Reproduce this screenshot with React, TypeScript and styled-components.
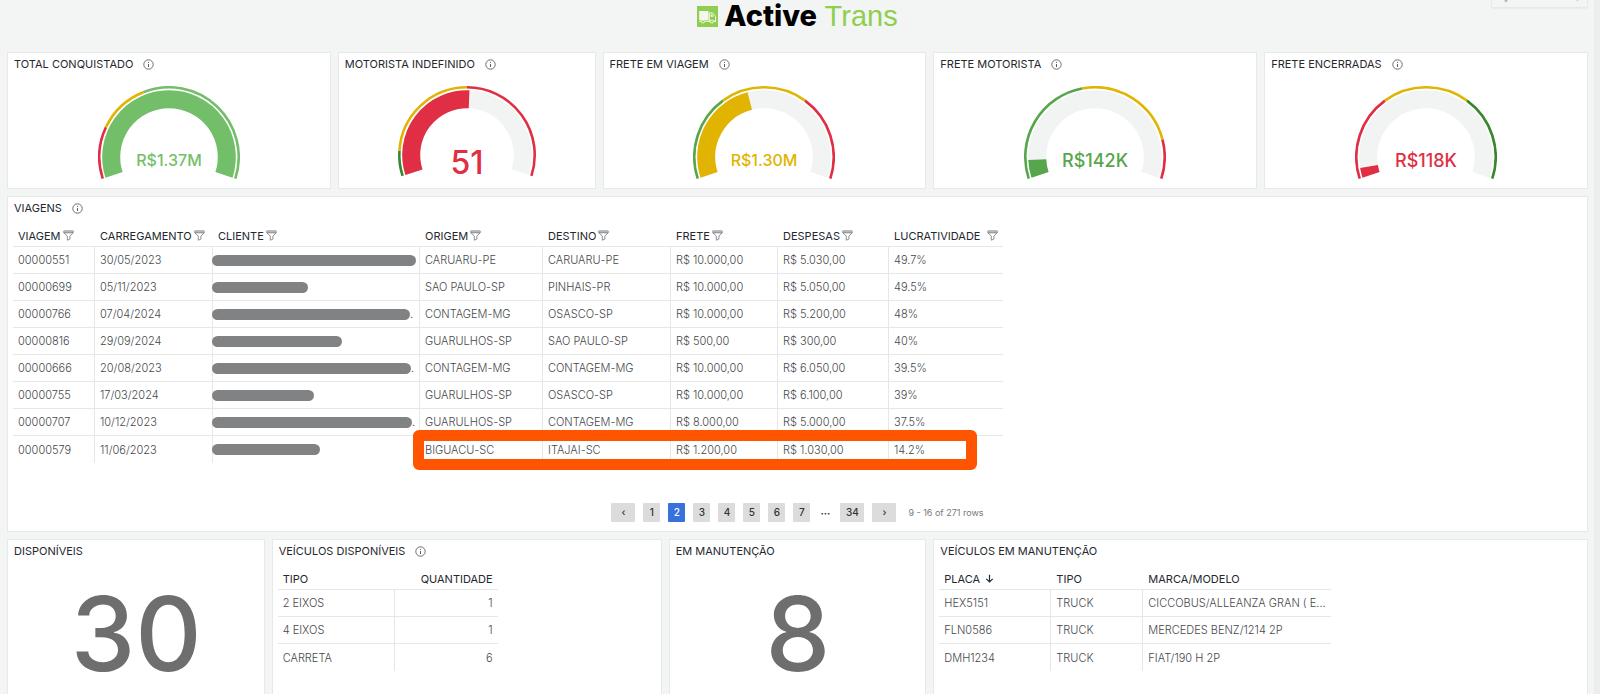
import React from "react";
import styled, { createGlobalStyle } from "styled-components";

const GREEN = "#73bf69";
const MID_GREEN = "#56a64b";
const DARK_GREEN = "#37872d";
const YELLOW = "#e0b400";
const RED = "#e02f44";

const GlobalStyle = createGlobalStyle`
  * { box-sizing: border-box; }
  body {
    margin: 0;
    background: #f3f5f4;
    color: #24292e;
    font-family: Inter, "Liberation Sans", sans-serif;
    font-size: 11px;
    line-height: 16px;
  }
`;

const Page = styled.div`
  display: flex;
  min-height: 100vh;
`;

const Main = styled.main`
  flex: 1;
  min-width: 0;
  display: flex;
  flex-direction: column;
  gap: 7px;
  padding: 0 6px 0 7px;
`;

const ScrollTrack = styled.div`
  width: 6px;
  background: #eceeed;
`;

const TopBar = styled.header`
  display: grid;
  grid-template-columns: 1fr auto 1fr;
  height: 45px;
`;

const Brand = styled.h1`
  grid-column: 2;
  display: flex;
  align-items: center;
  gap: 6px;
  height: 32px;
  margin: 0;
  font-size: 29px;
  line-height: 32px;
  font-weight: 400;
`;

const BrandStrong = styled.strong`
  font-weight: 800;
  color: #000;
`;

const BrandLight = styled.span`
  font-family: "Liberation Sans", Arial, sans-serif;
  color: #8fce4e;
`;

const TimeButton = styled.button`
  justify-self: end;
  display: flex;
  justify-content: space-between;
  align-items: flex-start;
  width: 97px;
  height: 8px;
  padding: 0 8px 0 12px;
  border: 1px solid #e7e9e8;
  border-top: 0;
  border-radius: 0 0 2px 2px;
  background: #f3f5f4;
  box-shadow: 0 1px 1px #e9ebea;
`;

const Row = styled.section<{ $fill?: boolean }>`
  display: grid;
  grid-template-columns: repeat(24, minmax(0, 1fr));
  gap: 7px;
  flex: ${(p) => (p.$fill ? "1 0 auto" : "0 0 auto")};
`;

const Panel = styled.article<{ $span: number; $height?: number; $open?: boolean }>`
  grid-column: span ${(p) => p.$span};
  display: flex;
  flex-direction: column;
  min-height: ${(p) => p.$height ?? 0}px;
  padding: 0 5px;
  background: #fff;
  border: 1px solid #e6e9e8;
  border-bottom-width: ${(p) => (p.$open ? 0 : 1)}px;
`;

const PanelTitle = styled.h2`
  display: flex;
  align-items: center;
  gap: 10px;
  height: 22px;
  margin: 0;
  padding-left: 1px;
  font-size: 11px;
  font-weight: 400;
`;

const GaugeSvg = styled.svg`
  display: block;
  margin: 11px auto 0;
`;

const TableWrap = styled.div`
  position: relative;
  align-self: flex-start;
  max-width: 100%;
  margin-top: 6px;
`;

const Table = styled.table<{ $width: number }>`
  width: ${(p) => p.$width}px;
  table-layout: fixed;
  border-collapse: separate;
  border-spacing: 0;
`;

const Th = styled.th<{ $right?: boolean }>`
  height: 22px;
  padding: 0 5px;
  border-bottom: 1px solid #e6e7e7;
  font-weight: 400;
  text-align: ${(p) => (p.$right ? "right" : "left")};
  white-space: nowrap;
`;

const HeadLabel = styled.span<{ $gap: number }>`
  display: inline-flex;
  align-items: center;
  gap: ${(p) => p.$gap}px;
`;

const Td = styled.td<{ $right?: boolean }>`
  height: 27px;
  padding: 0 5px;
  border-bottom: 1px solid #e6e7e7;
  border-right: 1px solid #e6e7e7;
  color: #45484b;
  font-weight: 300;
  text-align: ${(p) => (p.$right ? "right" : "left")};
  white-space: nowrap;
  &:last-child { border-right: 0; }
  tr:last-child > & { border-bottom: 0; }
`;

const Hidden = styled.div`
  display: flex;
  align-items: center;
  margin: 0 -6px;
`;

const Redaction = styled.span<{ $width: number }>`
  flex: none;
  width: ${(p) => p.$width}px;
  height: 11px;
  border-radius: 6px;
  background: #808284;
`;

const Highlight = styled.div`
  position: absolute;
  left: 400px;
  right: 26px;
  bottom: -7px;
  height: 40px;
  border: 11px solid #ff5500;
  border-radius: 6px;
  pointer-events: none;
`;

const Pager = styled.nav`
  display: flex;
  justify-content: center;
  align-items: center;
  gap: 8px;
  margin: auto 0 9px;
  font-size: 10px;
`;

const PageButton = styled.button<{ $active?: boolean; $wide?: boolean }>`
  width: ${(p) => (p.$wide ? 24 : 17)}px;
  height: 19px;
  padding: 0;
  border: 0;
  border-radius: 1px;
  background: ${(p) => (p.$active ? "#3871dc" : "#dcdcdc")};
  color: ${(p) => (p.$active ? "#fff" : "#303236")};
  font: 500 10px/19px Inter, sans-serif;
`;

const Dots = styled.span`
  width: 14px;
  font-weight: 700;
  text-align: center;
`;

const RowCount = styled.span`
  margin-left: 4px;
  font-size: 9px;
  color: #77797b;
`;

const Stat = styled.p`
  margin: 12px 0 0;
  padding-left: 1px;
  text-align: center;
  font-size: 103px;
  line-height: 120px;
  font-weight: 500;
  color: #6e6e6e;
`;

const InfoIcon = () => (
  <svg width="11" height="11" viewBox="0 0 11 11" fill="none" stroke="#5c5f62" aria-hidden="true">
    <circle cx="5.5" cy="5.5" r="4.7" strokeWidth="0.9" />
    <path d="M5.5 5v3" strokeWidth="1" />
    <path d="M5.5 2.9v1" strokeWidth="1" />
  </svg>
);

const FilterIcon = () => (
  <svg width="11" height="11" viewBox="0 0 11 11" fill="none" stroke="#808386" strokeWidth="0.9" strokeLinejoin="round" aria-hidden="true">
    <path d="M0.8 0.9h9.4v1.9L6.9 6v3.1L4.3 10.2V6L0.8 2.8z" />
    <path d="M1 1.9h9" strokeWidth="1.8" stroke="#b4b6b8" />
    <path d="M0.8 2.8h9.4" />
  </svg>
);

const ArrowDown = () => (
  <svg width="9" height="9" viewBox="0 0 9 9" fill="none" stroke="#24292e" strokeWidth="1.2" aria-hidden="true">
    <path d="M4.5 0.8v7M1.3 4.8l3.2 3.2 3.2-3.2" />
  </svg>
);

const TruckLogo = () => (
  <svg width="21" height="21" viewBox="0 0 21 21" aria-hidden="true">
    <rect width="21" height="21" fill="#8fce4e" />
    <path d="M2.2 5h9.3v9.2H2.2z" fill="#f3f9ec" />
    <path d="M12.3 7h3.3l3 3.6v4.6h-6.3z" fill="none" stroke="#f3f9ec" strokeWidth="1" />
    <path d="M13.6 8.5h1.6l1.5 2.2h-3.1z" fill="#f3f9ec" />
    <path d="M2.2 15.3h16.6" stroke="#f3f9ec" strokeWidth="1" />
    <g fill="#8fce4e" stroke="#f3f9ec" strokeWidth="0.9">
      <circle cx="5.8" cy="15.6" r="1.5" />
      <circle cx="14.8" cy="15.6" r="1.5" />
    </g>
  </svg>
);

type Zone = { to: number; color: string };

const SWEEP = 216;

function arc(cx: number, cy: number, r: number, from: number, to: number) {
  const point = (f: number) => {
    const a = ((f * SWEEP - SWEEP / 2) * Math.PI) / 180;
    return `${(cx + r * Math.sin(a)).toFixed(2)} ${(cy - r * Math.cos(a)).toFixed(2)}`;
  };
  const large = (to - from) * SWEEP > 180 ? 1 : 0;
  return `M${point(from)} A${r} ${r} 0 ${large} 1 ${point(to)}`;
}

type GaugeProps = {
  radius: number;
  label: string;
  size: number;
  value: number;
  color: string;
  zones: Zone[];
};

function Gauge({ radius, label, size, value, color, zones }: GaugeProps) {
  const c = 71;
  const thin = 2.6;
  const thick = 18;
  const ring = radius - thin / 2;
  const band = radius - 4.2 - thick / 2;
  return (
    <GaugeSvg width="142" height="96" viewBox="0 0 142 96" fill="none" role="img" aria-label={label}>
      <path d={arc(c, radius, band, 0, 1)} stroke="#f2f4f4" strokeWidth={thick} />
      <path d={arc(c, radius, band, 0, value)} stroke={color} strokeWidth={thick} />
      {zones.map((z, i) => (
        <path key={z.to} d={arc(c, radius, ring, i ? zones[i - 1].to : 0, z.to)} stroke={z.color} strokeWidth={thin} />
      ))}
      <text x={c} y={Math.round(72 + size * 0.5)} textAnchor="middle" fill={color} fontSize={size} fontWeight={500}>
        {label}
      </text>
    </GaugeSvg>
  );
}

const gauges: (GaugeProps & { title: string; span: number })[] = [
  { title: "TOTAL CONQUISTADO", span: 5, radius: 71, label: "R$1.37M", size: 16, value: 1, color: GREEN,
    zones: [{ to: 0.2, color: RED }, { to: 0.4, color: YELLOW }, { to: 1, color: GREEN }] },
  { title: "MOTORISTA INDEFINIDO", span: 4, radius: 69, label: "51", size: 32, value: 0.51, color: RED,
    zones: [{ to: 0.1, color: DARK_GREEN }, { to: 0.5, color: YELLOW }, { to: 1, color: RED }] },
  { title: "FRETE EM VIAGEM", span: 5, radius: 71, label: "R$1.30M", size: 16, value: 0.434, color: YELLOW,
    zones: [{ to: 0.333, color: MID_GREEN }, { to: 0.667, color: YELLOW }, { to: 1, color: RED }] },
  { title: "FRETE MOTORISTA", span: 5, radius: 71, label: "R$142K", size: 18, value: 0.071, color: MID_GREEN,
    zones: [{ to: 0.45, color: MID_GREEN }, { to: 0.85, color: YELLOW }, { to: 1, color: RED }] },
  { title: "FRETE ENCERRADAS", span: 5, radius: 71, label: "R$118K", size: 18, value: 0.039, color: RED,
    zones: [{ to: 0.333, color: RED }, { to: 0.667, color: YELLOW }, { to: 1, color: DARK_GREEN }] },
];

const tripColumns: [string, number][] = [
  ["VIAGEM", 82], ["CARREGAMENTO", 118], ["CLIENTE", 207], ["ORIGEM", 123],
  ["DESTINO", 128], ["FRETE", 107], ["DESPESAS", 111], ["LUCRATIVIDADE", 114],
];

type Trip = { id: string; date: string; bar: number; cut?: boolean; rest: string[] };

const trips: Trip[] = [
  { id: "00000551", date: "30/05/2023", bar: 204, rest: ["CARUARU-PE", "CARUARU-PE", "R$ 10.000,00", "R$ 5.030,00", "49.7%"] },
  { id: "00000699", date: "05/11/2023", bar: 96, rest: ["SAO PAULO-SP", "PINHAIS-PR", "R$ 10.000,00", "R$ 5.050,00", "49.5%"] },
  { id: "00000766", date: "07/04/2024", bar: 198, cut: true, rest: ["CONTAGEM-MG", "OSASCO-SP", "R$ 10.000,00", "R$ 5.200,00", "48%"] },
  { id: "00000816", date: "29/09/2024", bar: 130, rest: ["GUARULHOS-SP", "SAO PAULO-SP", "R$ 500,00", "R$ 300,00", "40%"] },
  { id: "00000666", date: "20/08/2023", bar: 199, cut: true, rest: ["CONTAGEM-MG", "CONTAGEM-MG", "R$ 10.000,00", "R$ 6.050,00", "39.5%"] },
  { id: "00000755", date: "17/03/2024", bar: 102, rest: ["GUARULHOS-SP", "OSASCO-SP", "R$ 10.000,00", "R$ 6.100,00", "39%"] },
  { id: "00000707", date: "10/12/2023", bar: 200, cut: true, rest: ["GUARULHOS-SP", "CONTAGEM-MG", "R$ 8.000,00", "R$ 5.000,00", "37.5%"] },
  { id: "00000579", date: "11/06/2023", bar: 108, rest: ["BIGUACU-SC", "ITAJAI-SC", "R$ 1.200,00", "R$ 1.030,00", "14.2%"] },
];

const available: [string, number][] = [["2 EIXOS", 1], ["4 EIXOS", 1], ["CARRETA", 6]];

const maintenance: [string, string, string][] = [
  ["HEX5151", "TRUCK", "CICCOBUS/ALLEANZA GRAN ( E..."],
  ["FLN0586", "TRUCK", "MERCEDES BENZ/1214 2P"],
  ["DMH1234", "TRUCK", "FIAT/190 H 2P"],
];

const Columns = ({ widths }: { widths: number[] }) => (
  <colgroup>
    {widths.map((w, i) => (
      <col key={i} style={{ width: w }} />
    ))}
  </colgroup>
);

export default function App() {
  return (
    <>
      <GlobalStyle />
      <Page>
        <Main>
          <TopBar>
            <Brand>
              <TruckLogo />
              <span>
                <BrandStrong>Active</BrandStrong>
                <BrandLight> Trans</BrandLight>
              </span>
            </Brand>
            <TimeButton aria-label="Período">
              <svg width="4" height="3" aria-hidden="true"><circle cx="2" cy="0.6" r="1.6" fill="#b9bbbb" /></svg>
              <svg width="3" height="2" aria-hidden="true"><circle cx="1.5" cy="0" r="1" fill="#c4c6c6" /></svg>
            </TimeButton>
          </TopBar>

          <Row>
            {gauges.map(({ title, span, ...gauge }) => (
              <Panel key={title} $span={span} $height={137}>
                <PanelTitle>{title}<InfoIcon /></PanelTitle>
                <Gauge {...gauge} />
              </Panel>
            ))}
          </Row>

          <Row>
            <Panel $span={24} $height={336}>
              <PanelTitle>VIAGENS<InfoIcon /></PanelTitle>
              <TableWrap>
                <Table $width={990}>
                  <Columns widths={tripColumns.map(([, w]) => w)} />
                  <thead>
                    <tr>
                      {tripColumns.map(([name]) => (
                        <Th key={name} scope="col">
                          <HeadLabel $gap={name === "LUCRATIVIDADE" ? 7 : 2}>{name}<FilterIcon /></HeadLabel>
                        </Th>
                      ))}
                    </tr>
                  </thead>
                  <tbody>
                    {trips.map((t) => (
                      <tr key={t.id}>
                        <Td>{t.id}</Td>
                        <Td>{t.date}</Td>
                        <Td>
                          <Hidden><Redaction $width={t.bar} />{t.cut ? "." : null}</Hidden>
                        </Td>
                        {t.rest.map((v, i) => <Td key={i}>{v}</Td>)}
                      </tr>
                    ))}
                  </tbody>
                </Table>
                <Highlight />
              </TableWrap>
              <Pager aria-label="Páginas">
                <PageButton $wide aria-label="Anterior">‹</PageButton>
                {[1, 2, 3, 4, 5, 6, 7].map((n) => (
                  <PageButton key={n} $active={n === 2}>{n}</PageButton>
                ))}
                <Dots>···</Dots>
                <PageButton $wide>34</PageButton>
                <PageButton $wide aria-label="Próxima">›</PageButton>
                <RowCount>9 - 16 of 271 rows</RowCount>
              </Pager>
            </Panel>
          </Row>

          <Row $fill>
            <Panel $span={4} $open>
              <PanelTitle>DISPONÍVEIS</PanelTitle>
              <Stat>30</Stat>
            </Panel>
            <Panel $span={6} $open>
              <PanelTitle>VEÍCULOS DISPONÍVEIS<InfoIcon /></PanelTitle>
              <TableWrap>
                <Table $width={220}>
                  <Columns widths={[117, 103]} />
                  <thead>
                    <tr><Th scope="col">TIPO</Th><Th scope="col" $right>QUANTIDADE</Th></tr>
                  </thead>
                  <tbody>
                    {available.map(([name, count]) => (
                      <tr key={name}><Td>{name}</Td><Td $right>{count}</Td></tr>
                    ))}
                  </tbody>
                </Table>
              </TableWrap>
            </Panel>
            <Panel $span={4} $open>
              <PanelTitle>EM MANUTENÇÃO</PanelTitle>
              <Stat>8</Stat>
            </Panel>
            <Panel $span={10} $open>
              <PanelTitle>VEÍCULOS EM MANUTENÇÃO</PanelTitle>
              <TableWrap>
                <Table $width={392}>
                  <Columns widths={[112, 92, 188]} />
                  <thead>
                    <tr>
                      <Th scope="col"><HeadLabel $gap={5}>PLACA <ArrowDown /></HeadLabel></Th>
                      <Th scope="col">TIPO</Th>
                      <Th scope="col">MARCA/MODELO</Th>
                    </tr>
                  </thead>
                  <tbody>
                    {maintenance.map(([plate, kind, model]) => (
                      <tr key={plate}><Td>{plate}</Td><Td>{kind}</Td><Td>{model}</Td></tr>
                    ))}
                  </tbody>
                </Table>
              </TableWrap>
            </Panel>
          </Row>
        </Main>
        <ScrollTrack />
      </Page>
    </>
  );
}
